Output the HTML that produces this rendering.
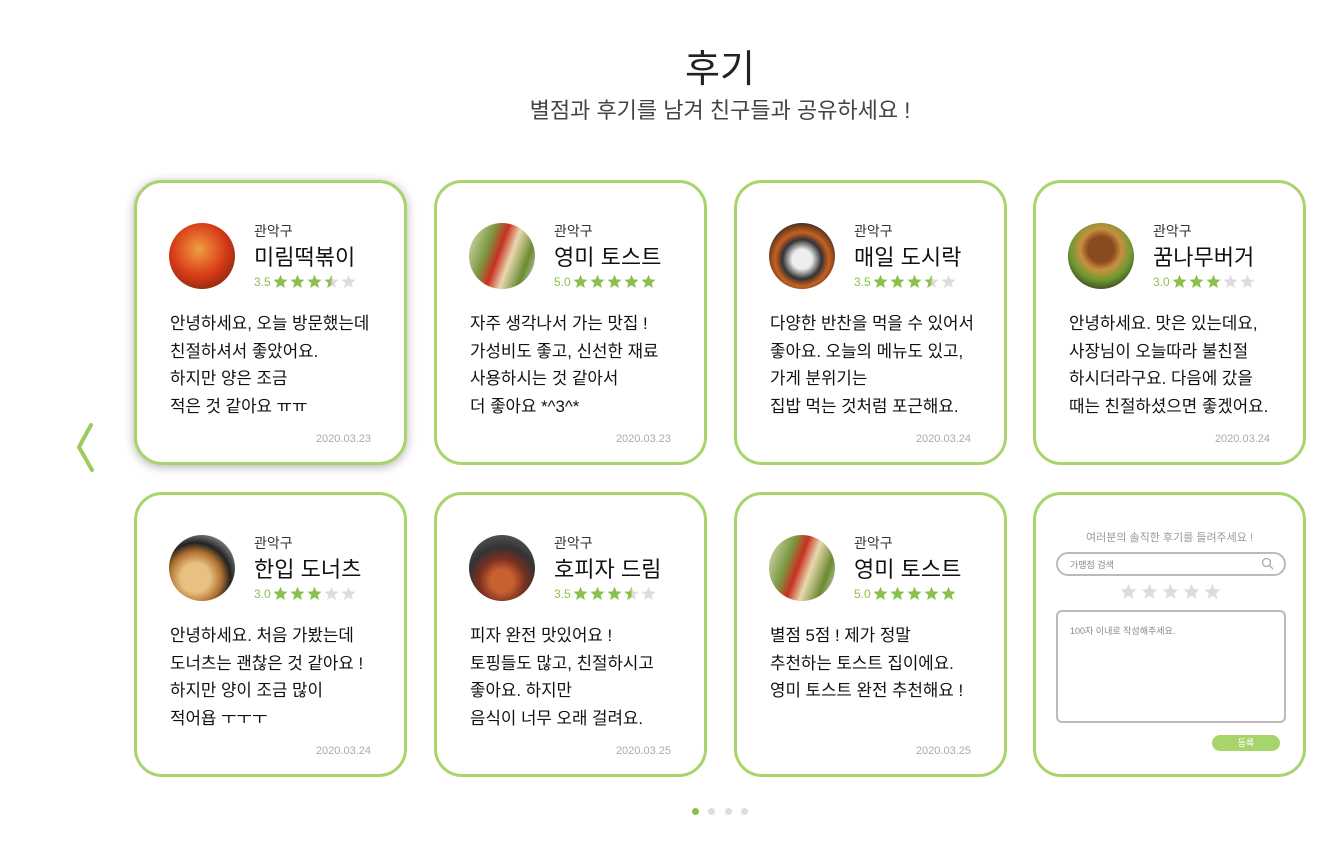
<!DOCTYPE html><html><head><meta charset="utf-8"><style>
*{margin:0;padding:0;box-sizing:border-box}
body{width:1327px;height:849px;background:#fff;font-family:"Liberation Sans","Noto Sans CJK KR",sans-serif;position:relative;overflow:hidden;color:#111}
.h1{position:absolute;left:0;width:1440px;top:38px;text-align:center;font-size:38px;font-weight:400;color:#222}
.h2{position:absolute;left:0;width:1440px;top:93px;text-align:center;font-size:22px;color:#444}
.card{position:absolute;width:273px;height:285px;border:3px solid #a8d46c;border-radius:28px;background:#fff}
.card.sh{box-shadow:0 2px 10px rgba(0,0,0,.3)}
.av{position:absolute;left:32px;top:40px;width:66px;height:66px;border-radius:50%}
.loc{position:absolute;left:117px;top:38px;font-size:14px;color:#333}
.tt{position:absolute;left:117px;top:57px;font-size:22px;font-weight:400;color:#111}
.rt{position:absolute;left:117px;top:91px;font-size:12px;color:#8cc04c;display:flex;align-items:center;gap:2px}
.rt svg{width:15px;height:15px}
.bd{position:absolute;left:33px;top:127px;font-size:16.8px;line-height:27.5px;color:#111;white-space:nowrap}
.dt{position:absolute;right:33px;top:250px;font-size:11px;color:#aaa}
.dot{position:absolute;top:808px;width:7px;height:7px;border-radius:50%;background:#ddd}
</style></head><body>
<div class="h1">후기</div>
<div class="h2">별점과 후기를 남겨 친구들과 공유하세요 !</div>
<svg style="position:absolute;left:70px;top:420px" width="30" height="56"><polyline points="21,5 9,27 22,50" fill="none" stroke="#9ccc5a" stroke-width="4" stroke-linecap="round" stroke-linejoin="round"/></svg>
<svg width="0" height="0" style="position:absolute"><defs><path id="st" d="M7.5 0.8l2 4.6 5 .4-3.8 3.3 1.2 4.9-4.4-2.7-4.4 2.7 1.2-4.9L0.5 5.8l5-.4z"/><clipPath id="hf"><rect x="0" y="0" width="7.5" height="15"/></clipPath></defs></svg>

<div class="card sh" style="left:134px;top:180px"><div class="av" style="background:radial-gradient(circle at 45% 40%,#f0a040,#d83a18 50%,#8a2a10 80%,#222 95%)"></div><div class="loc">관악구</div><div class="tt">미림떡볶이</div><div class="rt">3.5 <svg viewBox="0 0 15 15"><use href="#st" fill="#8cc04c"/></svg><svg viewBox="0 0 15 15"><use href="#st" fill="#8cc04c"/></svg><svg viewBox="0 0 15 15"><use href="#st" fill="#8cc04c"/></svg><svg viewBox="0 0 15 15"><use href="#st" fill="#ddd"/><use href="#st" fill="#8cc04c" clip-path="url(#hf)"/></svg><svg viewBox="0 0 15 15"><use href="#st" fill="#ddd"/></svg></div><div class="bd">안녕하세요, 오늘 방문했는데<br>친절하셔서 좋았어요.<br>하지만 양은 조금<br>적은 것 같아요 ㅠㅠ</div><div class="dt">2020.03.23</div></div>

<div class="card" style="left:434px;top:180px"><div class="av" style="background:linear-gradient(110deg,#e8e0c8,#7a9a40 30%,#c83020 45%,#e8d8b0 60%,#6a8a30 80%,#ddd)"></div><div class="loc">관악구</div><div class="tt">영미 토스트</div><div class="rt">5.0 <svg viewBox="0 0 15 15"><use href="#st" fill="#8cc04c"/></svg><svg viewBox="0 0 15 15"><use href="#st" fill="#8cc04c"/></svg><svg viewBox="0 0 15 15"><use href="#st" fill="#8cc04c"/></svg><svg viewBox="0 0 15 15"><use href="#st" fill="#8cc04c"/></svg><svg viewBox="0 0 15 15"><use href="#st" fill="#8cc04c"/></svg></div><div class="bd">자주 생각나서 가는 맛집 !<br>가성비도 좋고, 신선한 재료<br>사용하시는 것 같아서<br>더 좋아요 *^3^*</div><div class="dt">2020.03.23</div></div>

<div class="card" style="left:734px;top:180px"><div class="av" style="background:radial-gradient(circle at 50% 55%,#eee 20%,#333 40%,#c86020 55%,#222 80%)"></div><div class="loc">관악구</div><div class="tt">매일 도시락</div><div class="rt">3.5 <svg viewBox="0 0 15 15"><use href="#st" fill="#8cc04c"/></svg><svg viewBox="0 0 15 15"><use href="#st" fill="#8cc04c"/></svg><svg viewBox="0 0 15 15"><use href="#st" fill="#8cc04c"/></svg><svg viewBox="0 0 15 15"><use href="#st" fill="#ddd"/><use href="#st" fill="#8cc04c" clip-path="url(#hf)"/></svg><svg viewBox="0 0 15 15"><use href="#st" fill="#ddd"/></svg></div><div class="bd">다양한 반찬을 먹을 수 있어서<br>좋아요. 오늘의 메뉴도 있고,<br>가게 분위기는<br>집밥 먹는 것처럼 포근해요.</div><div class="dt">2020.03.24</div></div>

<div class="card" style="left:1033px;top:180px"><div class="av" style="background:radial-gradient(circle at 50% 40%,#8a4a20 25%,#c89040 40%,#6a9a30 60%,#3a3020 85%)"></div><div class="loc">관악구</div><div class="tt">꿈나무버거</div><div class="rt">3.0 <svg viewBox="0 0 15 15"><use href="#st" fill="#8cc04c"/></svg><svg viewBox="0 0 15 15"><use href="#st" fill="#8cc04c"/></svg><svg viewBox="0 0 15 15"><use href="#st" fill="#8cc04c"/></svg><svg viewBox="0 0 15 15"><use href="#st" fill="#ddd"/></svg><svg viewBox="0 0 15 15"><use href="#st" fill="#ddd"/></svg></div><div class="bd">안녕하세요. 맛은 있는데요,<br>사장님이 오늘따라 불친절<br>하시더라구요. 다음에 갔을<br>때는 친절하셨으면 좋겠어요.</div><div class="dt">2020.03.24</div></div>

<div class="card" style="left:134px;top:492px"><div class="av" style="background:radial-gradient(circle at 40% 65%,#e8c080 25%,#b07030 45%,#222 60%,#888 80%,#111)"></div><div class="loc">관악구</div><div class="tt">한입 도너츠</div><div class="rt">3.0 <svg viewBox="0 0 15 15"><use href="#st" fill="#8cc04c"/></svg><svg viewBox="0 0 15 15"><use href="#st" fill="#8cc04c"/></svg><svg viewBox="0 0 15 15"><use href="#st" fill="#8cc04c"/></svg><svg viewBox="0 0 15 15"><use href="#st" fill="#ddd"/></svg><svg viewBox="0 0 15 15"><use href="#st" fill="#ddd"/></svg></div><div class="bd">안녕하세요. 처음 가봤는데<br>도너츠는 괜찮은 것 같아요 !<br>하지만 양이 조금 많이<br>적어욥 ㅜㅜㅜ</div><div class="dt">2020.03.24</div></div>

<div class="card" style="left:434px;top:492px"><div class="av" style="background:radial-gradient(circle at 50% 70%,#c86030 20%,#7a3020 40%,#333 60%,#555 85%)"></div><div class="loc">관악구</div><div class="tt">호피자 드림</div><div class="rt">3.5 <svg viewBox="0 0 15 15"><use href="#st" fill="#8cc04c"/></svg><svg viewBox="0 0 15 15"><use href="#st" fill="#8cc04c"/></svg><svg viewBox="0 0 15 15"><use href="#st" fill="#8cc04c"/></svg><svg viewBox="0 0 15 15"><use href="#st" fill="#ddd"/><use href="#st" fill="#8cc04c" clip-path="url(#hf)"/></svg><svg viewBox="0 0 15 15"><use href="#st" fill="#ddd"/></svg></div><div class="bd">피자 완전 맛있어요 !<br>토핑들도 많고, 친절하시고<br>좋아요. 하지만<br>음식이 너무 오래 걸려요.</div><div class="dt">2020.03.25</div></div>

<div class="card" style="left:734px;top:492px"><div class="av" style="background:linear-gradient(110deg,#e8e0c8,#7a9a40 30%,#c83020 45%,#e8d8b0 60%,#6a8a30 80%,#ddd)"></div><div class="loc">관악구</div><div class="tt">영미 토스트</div><div class="rt">5.0 <svg viewBox="0 0 15 15"><use href="#st" fill="#8cc04c"/></svg><svg viewBox="0 0 15 15"><use href="#st" fill="#8cc04c"/></svg><svg viewBox="0 0 15 15"><use href="#st" fill="#8cc04c"/></svg><svg viewBox="0 0 15 15"><use href="#st" fill="#8cc04c"/></svg><svg viewBox="0 0 15 15"><use href="#st" fill="#8cc04c"/></svg></div><div class="bd">별점 5점 ! 제가 정말<br>추천하는 토스트 집이에요.<br>영미 토스트 완전 추천해요 !</div><div class="dt">2020.03.25</div></div>

<div class="card" style="left:1033px;top:492px">
<div style="position:absolute;left:0;width:267px;top:34px;text-align:center;font-size:11px;color:#999">여러분의 솔직한 후기를 들려주세요 !</div>
<div style="position:absolute;left:20px;top:57px;width:230px;height:24px;border:2px solid #bbb;border-radius:12px;font-size:9px;color:#888;padding:4px 0 0 12px">가맹점 검색<svg style="position:absolute;right:10px;top:3px" width="13" height="13"><circle cx="5.5" cy="5.5" r="4" fill="none" stroke="#aaa" stroke-width="1.3"/><line x1="8.5" y1="8.5" x2="12" y2="12" stroke="#aaa" stroke-width="1.3"/></svg></div>
<div style="position:absolute;left:84px;top:88px;display:flex;gap:4px"><svg width="17" height="17" viewBox="0 0 15 15"><use href="#st" fill="#ddd"/></svg><svg width="17" height="17" viewBox="0 0 15 15"><use href="#st" fill="#ddd"/></svg><svg width="17" height="17" viewBox="0 0 15 15"><use href="#st" fill="#ddd"/></svg><svg width="17" height="17" viewBox="0 0 15 15"><use href="#st" fill="#ddd"/></svg><svg width="17" height="17" viewBox="0 0 15 15"><use href="#st" fill="#ddd"/></svg></div>
<div style="position:absolute;left:20px;top:115px;width:230px;height:113px;border:2px solid #bbb;border-radius:6px;font-size:9px;color:#888;padding:12px 0 0 12px">100자 이내로 작성해주세요.</div>
<div style="position:absolute;left:176px;top:240px;width:68px;height:16px;border-radius:8px;background:#a8d46c;color:#fff;font-size:9px;text-align:center;line-height:16px">등록</div>
</div>

<div class="dot" style="left:692px;background:#8cc04c"></div>
<div class="dot" style="left:708px"></div>
<div class="dot" style="left:725px"></div>
<div class="dot" style="left:741px"></div>
</body></html>
